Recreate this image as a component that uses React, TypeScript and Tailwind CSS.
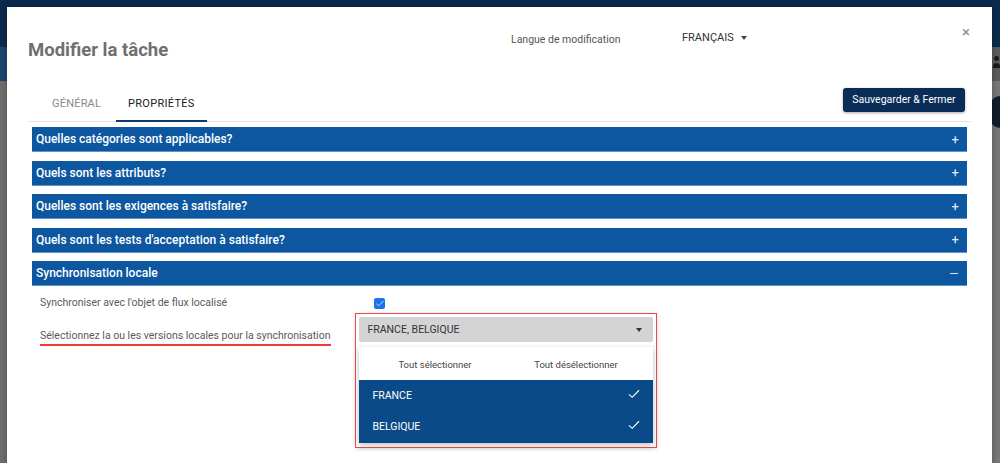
import React from "react";

const sections = [
  "Quelles catégories sont applicables?",
  "Quels sont les attributs?",
  "Quelles sont les exigences à satisfaire?",
  "Quels sont les tests d'acceptation à satisfaire?",
];

function AccordionHeader({ title, open }: { title: string; open?: boolean }) {
  return (
    <div className="h-[25px] flex items-center justify-between bg-[#0d56a0] border-b border-[#5f93cc] pl-[4px] pr-[8px] text-white">
      <span className="text-[12px] font-medium">{title}</span>
      {open ? (
        <span className="block w-[8px] h-[1px] bg-[#dbe7f5] mr-[1px]" />
      ) : (
        <span className="text-[13px] leading-none text-[#e6eef8]">+</span>
      )}
    </div>
  );
}

function Check({ className }: { className?: string }) {
  return (
    <svg viewBox="0 0 14 12" className={className} fill="none" stroke="currentColor" strokeWidth="1.3">
      <polyline points="1,6.5 4.8,10 13,1.5" />
    </svg>
  );
}

export default function App() {
  return (
    <div
      className="relative w-[1000px] h-[463px] overflow-hidden bg-[#777777]"
      style={{ fontFamily: "Roboto, 'Liberation Sans', sans-serif" }}
    >
      {/* page behind the dimmed overlay */}
      <div className="h-[47px] bg-[#0b2b4c]" />
      <div className="h-[34px] flex justify-between">
        <div className="w-[7px] bg-[#1c4470]" />
        <div className="w-[8px] bg-[#5b5b5b] relative">
          <span className="absolute left-[2px] top-[9px] w-[5px] h-[5px] rounded-full bg-[#1a1a1a]" />
          <span className="absolute left-[1px] top-[16px] w-[7px] h-[5px] rounded-t-full bg-[#1a1a1a]" />
        </div>
      </div>
      <div className="absolute left-[1px] top-[145px] w-[5px] h-[11px] border border-[#24496f] rounded-[1px]" />
      <div className="absolute left-[990px] top-[96px] w-[20px] h-[32px] rounded-full bg-[#101d2c]" />
      <div className="absolute left-0 top-[81px] w-[7px] h-[382px] bg-[#6e6e6e]" />

      {/* modal */}
      <div className="absolute left-[7px] top-[7px] w-[985px] h-[470px] bg-white shadow-[0_0_6px_rgba(0,0,0,0.3)] px-[21px]">
        <div className="h-[81px] flex items-start">
          <h1 className="w-[483px] mt-[31px] text-[18.5px] leading-[24px] font-bold text-[#6f6f6f]">
            Modifier la tâche
          </h1>
          <div className="w-[171px] mt-[25px] text-[10.5px] leading-[16px] text-[#555555]">
            Langue de modification
          </div>
          <div className="mt-[23px] flex items-center gap-[7px] text-[11px] leading-[16px] text-[#333333]">
            <span>FRANÇAIS</span>
            <span className="block w-0 h-0 border-l-[3.5px] border-r-[3.5px] border-t-[4px] border-l-transparent border-r-transparent border-t-[#444444]" />
          </div>
          <div className="ml-auto mr-[1px] mt-[17px] text-[15px] leading-[16px] text-[#8a8a8a]">×</div>
        </div>

        <div className="h-[34px] flex border-b border-[#e6e6e6]">
          <div className="w-[88px] pl-[24px] flex items-center text-[11px] tracking-[0.2px] text-[#8a8a8a]">GÉNÉRAL</div>
          <div className="w-[91px] pl-[12px] flex items-center text-[11px] tracking-[0.3px] text-[#222222] border-b-2 border-[#0b3a6b] -mb-[1px]">
            PROPRIÉTÉS
          </div>
          <button className="ml-auto mr-[6px] h-[24px] w-[122px] rounded-[3px] bg-[#0a2d58] text-white text-[10.5px] shadow-[0_1px_3px_rgba(0,0,0,0.35)]">
            Sauvegarder &amp; Fermer
          </button>
        </div>

        <div className="mt-[5px] mx-[4px] flex flex-col gap-[8.5px]">
          {sections.map((s) => (
            <AccordionHeader key={s} title={s} />
          ))}
          <div>
            <AccordionHeader title="Synchronisation locale" open />
            <div className="pl-[8px] pt-[7px]">
              <div className="h-[20px] flex items-center">
                <div className="w-[315px] text-[10.5px] text-[#5a5a5a] whitespace-nowrap">Synchroniser avec l'objet de flux localisé</div>
                <div className="ml-[19px] w-[11px] h-[11px] rounded-[2px] bg-[#1a73e8] text-white flex items-center justify-center">
                  <Check className="w-[8px] h-[7px]" />
                </div>
              </div>
              <div className="flex items-start">
                <div className="w-[315px] pt-[9px]">
                  <div className="inline-flex flex-col">
                    <span className="whitespace-nowrap text-[10.5px] leading-[16px] text-[#5a5a5a] pr-[1px]">
                      Sélectionnez la ou les versions locales pour la synchronisation
                    </span>
                    <span className="block h-[1.5px] bg-[#ef3b36]" />
                  </div>
                </div>
                <div className="w-[302px] h-[135px] border-[1.5px] border-[#ef4b45] pt-[3px] pl-[2.5px] pr-[3.5px] shadow-[0_1px_4px_rgba(0,0,0,0.15)]">
                  <div className="h-[25px] rounded-[2px] bg-[#d4d4d4] flex items-center justify-between pl-[9px] pr-[11px] text-[10.5px] text-[#333333]">
                    <span>FRANCE, BELGIQUE</span>
                    <span className="block w-0 h-0 border-l-[3.5px] border-r-[3.5px] border-t-[4px] border-l-transparent border-r-transparent border-t-[#333333]" />
                  </div>
                  <div className="mt-[5px] bg-white shadow-[0_2px_6px_rgba(0,0,0,0.25)]">
                    <div className="h-[33px] pt-[4px] px-[6px] grid grid-cols-2 items-center text-[9.5px] text-[#444444] text-center">
                      <span>Tout sélectionner</span>
                      <span>Tout désélectionner</span>
                    </div>
                    <div className="bg-[#0a4a88] text-white text-[10.5px]">
                      <div className="h-[31.5px] flex items-center justify-between pl-[14px] pr-[13px]">
                        <span>FRANCE</span>
                        <Check className="w-[12px] h-[10px] -mt-[4px]" />
                      </div>
                      <div className="h-[31.5px] flex items-center justify-between pl-[14px] pr-[13px]">
                        <span>BELGIQUE</span>
                        <Check className="w-[12px] h-[10px] -mt-[4px]" />
                      </div>
                    </div>
                  </div>
                </div>
              </div>
            </div>
          </div>
        </div>
      </div>
    </div>
  );
}
